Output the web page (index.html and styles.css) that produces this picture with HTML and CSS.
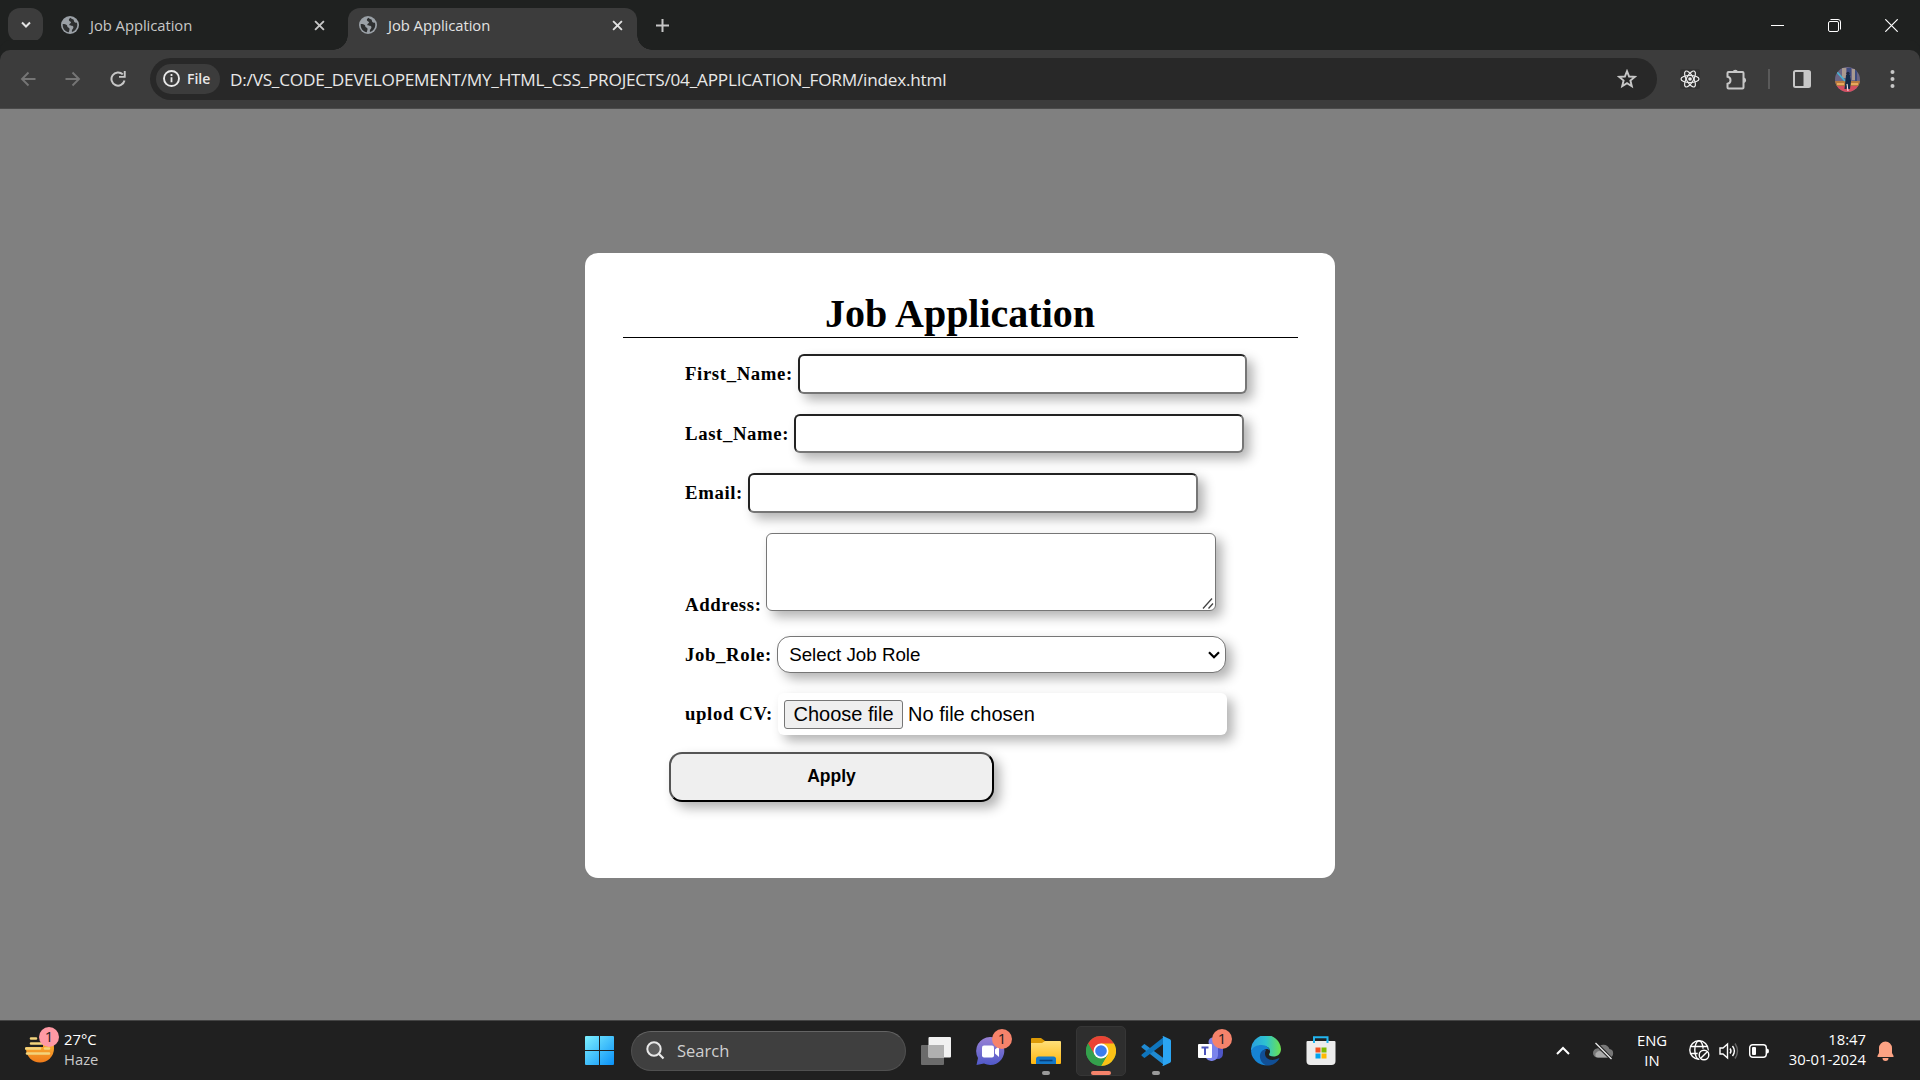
FILE: index.html
```html
<!DOCTYPE html>
<html lang="en">
<head>
<meta charset="utf-8">
<title>Job Application</title>
<link rel="stylesheet" href="styles.css">
</head>
<body>
<svg class="defs" width="0" height="0">
  <defs>
    <symbol id="globe" viewBox="0 0 18 18">
      <circle cx="9" cy="9" r="9" fill="#9aa0a6"/>
      <path d="M9.500 1.700C8 2.600 7.600 3.600 8 4.600c.5 1 1.900.8 2 1.800.1 1-1.700 1-1.700 2.200 0 1 .9 1.100 2 1.100 1.500 0 2.300.6 2.100 1.800-.2 1.500-1.600 1.800-1.600 3.400l.2 1.200c3.300-1.100 5.300-3.900 5.300-7.100 0-1-.2-1.800-.5-2.600-.8.5-1.800.2-2.400-.5-.8-.9-.2-1.600-1-2.400-.7-.6-1.900-.5-2.900-1.800zM1.700 8c1.900.1 3.600.3 4.300 1.300.5.9.1 1.700 1.100 2.100 1.100.4 1.600 1 1.400 2.100l-.7 2.700C4.500 15.800 1.700 12.900 1.700 9z" fill="#2d2f30"/>
    </symbol>
    <symbol id="cross" viewBox="0 0 10 10"><path d="M1 1l8 8M9 1l-8 8" stroke="currentColor" stroke-width="1.700" fill="none"/></symbol>
  </defs>
</svg>

<header class="tabs">
  <div class="tab-search"><svg width="10" height="8" viewBox="0 0 10 8"><path d="M1 1.500l4 4 4-4" fill="none" stroke="#e3e3e3" stroke-width="2"/></svg></div>
  <div class="tab">
    <svg class="favicon"><use href="#globe"/></svg><span class="tab-title">Job Application</span><svg class="tab-close"><use href="#cross"/></svg>
  </div>
  <div class="tab active">
    <svg class="favicon"><use href="#globe"/></svg><span class="tab-title">Job Application</span><svg class="tab-close"><use href="#cross"/></svg>
  </div>
  <svg class="new-tab" width="13" height="13" viewBox="0 0 13 13"><path d="M6.500 0v13M0 6.500h13" stroke="#c7c7c7" stroke-width="2"/></svg>
  <div class="window-buttons">
    <svg width="13" height="13" viewBox="0 0 13 13"><path d="M0 6.500h13" stroke="#fff"/></svg>
    <svg width="13" height="13" viewBox="0 0 13 13"><rect x=".5" y="2.500" width="10" height="10" rx="1.500" fill="none" stroke="#fff"/><path d="M2.500.5h7.500a2.500 2.500 0 0 1 2.500 2.500v7.500" fill="none" stroke="#fff"/></svg>
    <svg width="13" height="13" viewBox="0 0 13 13"><path d="M.3.3l12.400 12.400M12.700.3L.3 12.700" stroke="#fff" stroke-width="1.200"/></svg>
  </div>
</header>

<nav class="toolbar">
  <div class="nav-buttons">
    <svg width="16" height="16" viewBox="0 0 16 16"><path d="M15.500 8H2M8.500 1.500L2 8l6.500 6.500" fill="none" stroke="#757575" stroke-width="1.900"/></svg>
    <svg width="16" height="16" viewBox="0 0 16 16"><path d="M.5 8H14M7.500 1.500L14 8l-6.500 6.500" fill="none" stroke="#757575" stroke-width="1.900"/></svg>
    <svg width="16" height="16" viewBox="0 0 16 16"><path d="M14.500 9.500A6.600 6.600 0 1 1 12.800 3.400" fill="none" stroke="#c7c7c7" stroke-width="2"/><path d="M15.700 0v6.700H9V4.900h4.800V0z" fill="#c7c7c7"/></svg>
  </div>
  <div class="omnibox">
    <div class="chip"><svg width="17" height="17" viewBox="0 0 17 17"><circle cx="8.500" cy="8.500" r="7.500" fill="none" stroke="#e8e8e8" stroke-width="1.900"/><path d="M8.500 7.300v5M8.500 4v2" stroke="#e8e8e8" stroke-width="1.800"/></svg><span>File</span></div>
    <span class="url">D:/VS_CODE_DEVELOPEMENT/MY_HTML_CSS_PROJECTS/04_APPLICATION_FORM/index.html</span>
    <svg class="star" width="20" height="20" viewBox="0 0 20 20"><path d="M10 2.200l2.100 5.300 5.700.4-4.400 3.700 1.400 5.600-4.800-3.100-4.800 3.100 1.400-5.600L2.200 7.900l5.700-.4z" fill="none" stroke="#c7c7c7" stroke-width="1.900"/></svg>
  </div>
  <div class="extensions">
    <svg class="react" width="20" height="20" viewBox="0 0 20 20"><rect width="20" height="20" rx="2" fill="#333"/><g fill="none" stroke="#eee" stroke-width="1.200"><ellipse cx="10" cy="10" rx="9" ry="3.500"/><ellipse cx="10" cy="10" rx="9" ry="3.500" transform="rotate(60 10 10)"/><ellipse cx="10" cy="10" rx="9" ry="3.500" transform="rotate(120 10 10)"/></g><circle cx="10" cy="10" r="1.800" fill="#eee"/></svg>
    <svg class="puzzle" width="21" height="21" viewBox="0 0 21 21"><path d="M2.500 3h14q1 0 1 1v14.500q0 1-1 1h-14q-1 0-1-1v-3.700C5.500 14 5.500 8.500 1.500 7.700V4q0-1 1-1z" fill="none" stroke="#c7c7c7" stroke-width="2"/><path d="M6.500 3a2.900 2.900 0 0 1 5.600 0zM18 8.500a2.900 2.900 0 0 1 0 5.600z" fill="#c7c7c7"/></svg>
    <i class="divider"></i>
    <svg class="panel" width="18" height="18" viewBox="0 0 18 18"><rect x="1" y="1" width="16" height="16" rx="1.500" fill="none" stroke="#c7c7c7" stroke-width="2"/><path d="M10.500 1H17v16h-6.500z" fill="#c7c7c7"/></svg>
    <svg class="avatar" width="25" height="25" viewBox="0 0 25 25"><clipPath id="round"><circle cx="12.500" cy="12.500" r="12.500"/></clipPath><g clip-path="url(#round)"><path fill="#6c6685" d="M0 0h25v25H0z"/><path fill="#a99a91" d="M7 1h4v10H7zM17 2h3v11h-3z"/><path fill="#3d4c80" d="M12 1h4v8h-4zM20 3h2v11h-2z"/><path fill="#b7793e" d="M0 14h25v5H0z"/><path fill="#d44e60" d="M0 19h25v6H0z"/><path fill="#e8a75d" d="M2 16h7v2H2zM16 16h7v2h-7z"/><path d="M2 5l8 9" stroke="#45b2d2" stroke-width="1.700"/><circle cx="13" cy="6.500" r="1.700" fill="#1d2740"/><path d="M11 8h4l1 6-1 8h-2l-.5-6-1 6h-2l1-9z" fill="#152b49"/><path d="M12 17l1 7" stroke="#eee"/></g></svg>
    <svg class="menu" width="5" height="18" viewBox="0 0 5 18"><g fill="#c7c7c7"><circle cx="2.500" cy="2" r="2"/><circle cx="2.500" cy="9" r="2"/><circle cx="2.500" cy="16" r="2"/></g></svg>
  </div>
</nav>

<main class="page">
  <section class="card">
    <h1>Job Application</h1>
    <form class="form">
      <div class="row first"><label for="first">First_Name:</label><input id="first" class="field" type="text"></div>
      <div class="row last"><label for="last">Last_Name:</label><input id="last" class="field" type="text"></div>
      <div class="row email"><label for="mail">Email:</label><input id="mail" class="field" type="email"></div>
      <div class="row address"><label for="addr">Address:</label>
        <div class="control"><textarea id="addr" class="field area"></textarea><svg class="grip" width="12" height="11" viewBox="0 0 12 11"><path d="M1 10.500L10 .5M6.500 10.500L11 5.500" stroke="#444" stroke-width="1.300"/></svg></div>
      </div>
      <div class="row role"><label for="role">Job_Role:</label>
        <div class="control"><select id="role" class="field select"><option>Select Job Role</option></select><svg class="arrow" width="12" height="8" viewBox="0 0 12 8"><path d="M1 1.200l5 5 5-5" fill="none" stroke="#000" stroke-width="2.200"/></svg></div>
      </div>
      <div class="row upload"><label>uplod CV:</label><div class="file"><span class="file-button">Choose file</span><span>No file chosen</span></div></div>
      <button class="apply" type="button">Apply</button>
    </form>
  </section>
</main>

<footer class="taskbar">
  <div class="weather">
    <div class="badged">
      <svg width="29" height="26" viewBox="0 0 29 26"><defs><linearGradient id="sun" x2="0" y2="1"><stop stop-color="#ffc83d"/><stop offset="1" stop-color="#ef7b1a"/></linearGradient></defs><circle cx="15" cy="11.500" r="14" fill="url(#sun)"/><path d="M0 0h18v10H0z" fill="#202020"/><path d="M6 1.500h5M6 6.500h14M1 11.500h14M20 11.500h4M2 16.500h22" stroke="#f3d47c" stroke-width="2.600" stroke-linecap="round"/></svg>
      <b class="badge pink">1</b>
    </div>
    <div class="weather-text"><span>27°C</span><span class="haze">Haze</span></div>
  </div>

  <div class="apps">
    <svg class="start" width="29" height="29" viewBox="0 0 29 29"><defs><linearGradient id="win" gradientUnits="userSpaceOnUse" x2="29" y2="29"><stop stop-color="#7df0ff"/><stop offset="1" stop-color="#0a91f8"/></linearGradient></defs><path d="M1 0h13v14H0V1q0-1 1-1zM15 0h13q1 0 1 1v13H15zM0 15h14v14H1q-1 0-1-1zM15 15h14v13q0 1-1 1H15z" fill="url(#win)"/></svg>
    <div class="search"><svg width="19" height="19" viewBox="0 0 19 19"><circle cx="8" cy="8" r="6.700" fill="#5c5c5c" stroke="#e8e8e8" stroke-width="2"/><path d="M12.800 12.800l4.700 4.700" stroke="#e8e8e8" stroke-width="2.200"/></svg><span>Search</span></div>
    <div class="icons">
      <div class="app"><svg width="30" height="28" viewBox="0 0 30 28"><rect y="8" width="23" height="20" rx="1" fill="#6b6b6b"/><rect x="7.500" width="22.500" height="20.500" rx="1" fill="#f1f1f1"/><path d="M7.500 8H23v12.500H7.500z" fill="#b0b0b0"/></svg></div>
      <div class="app">
        <svg class="chat" width="30" height="30" viewBox="0 0 30 30"><defs><linearGradient id="chat" x2="0" y2="1"><stop stop-color="#9a82d5"/><stop offset="1" stop-color="#5059c9"/></linearGradient></defs><path d="M15 1a14 14 0 1 1-6 26.500L1.500 29 3 22A14 14 0 0 1 15 1z" fill="url(#chat)"/><rect x="7" y="9.500" width="12" height="12" rx="2" fill="#fff"/><path d="M20 13.500l4-3.500v11l-4-3.500z" fill="#fff"/></svg>
        <b class="badge">1</b>
      </div>
      <div class="app"><svg width="30" height="30" viewBox="0 0 30 30"><defs><linearGradient id="fold" x2="0" y2="1"><stop stop-color="#ffe07a"/><stop offset="1" stop-color="#ffb70f"/></linearGradient></defs><path d="M0 3q0-1 1-1h9l4 3v8H0z" fill="#dc9a06"/><path d="M0 7h11l3-2h15q1 0 1 1v21q0 1-1 1H1q-1 0-1-1z" fill="url(#fold)"/><path d="M5 28v-5q0-2.500 2.500-2.500h15Q25 20.500 25 23v5z" fill="#1378c9"/><path d="M8.500 24.500h13" stroke="#073f7c" stroke-width="1.600"/></svg><i class="dot"></i></div>
      <div class="app current"><svg width="30" height="30" viewBox="0 0 30 30"><circle cx="15" cy="15" r="15" fill="#34a04c"/><path d="M15 15L2 7.500A15 15 0 0 1 28 7.500z" fill="#ea4335"/><path d="M15 7.500h13A15 15 0 0 1 15 30l6.500-11.200z" fill="#fbc116"/><path d="M2 7.500l6.500 11.300L15 7.500z" fill="#ea4335"/><path d="M2 7.500l6.500 11.300A7.500 7.500 0 0 0 15 22.500L21.500 18.800 15 30A15 15 0 0 1 2 7.500z" fill="#34a04c"/><circle cx="15" cy="15" r="7.500" fill="#fff"/><circle cx="15" cy="15" r="5.800" fill="#3b7ded"/></svg><i class="dot wide"></i></div>
      <div class="app"><svg width="30" height="30" viewBox="0 0 30 30"><path d="M.7 10.200l2-1.800q.7-.6 1.500 0L23 22.500V29L.7 11.500q-.7-.7 0-1.300z" fill="#1f8ad2"/><path d="M.7 19.800l2 1.800q.7.600 1.500 0L23 7.500V.8L.7 18.500q-.7.7 0 1.300z" fill="#0f75bd"/><path d="M22 0l7 3.200q1 .5 1 1.700v20.200q0 1.200-1 1.700L22 30q-.8 0-1.400-.6 1.400.8 1.400-1V1.600q0-1.800-1.400-1Q21.200 0 22 0z" fill="#2ba5f3"/></svg><i class="dot"></i></div>
      <div class="app">
        <svg width="30" height="30" viewBox="0 0 30 30"><circle cx="17" cy="6" r="4.500" fill="#7b83eb"/><path d="M18 10h9v7q0 6-6 6h-3z" fill="#4e56c7"/><path d="M11 10h11v9a6.500 6.500 0 0 1-12 3z" fill="#7b83eb"/><rect x="2" y="8" width="14" height="14" rx="1" fill="#fff"/><path d="M5.500 11.500h7M9 11.500V19" stroke="#4b53bc" stroke-width="2"/></svg>
        <b class="badge">1</b>
      </div>
      <div class="app"><svg width="30" height="30" viewBox="0 0 30 30"><defs><linearGradient id="e1" x2="1"><stop stop-color="#299ee0"/><stop offset=".5" stop-color="#2ec3d0"/><stop offset="1" stop-color="#6be24d"/></linearGradient></defs><path d="M0 15a15 15 0 0 1 30-2c0 5-3.500 7.500-7.500 7.500-3 0-5-1-4.300-2.500 2-3 .5-7.500-5-8C7 9.500 2 12 0 15z" fill="url(#e1)"/><path d="M0 15C1.500 11 6 9 10.500 9c5 0 8 3 8.300 6-1-2-3.300-2.500-5-1.500-4 2.500-3 9.500 2 12.500 1.700 1 4 1.500 5 2A15 15 0 0 1 0 15z" fill="#1683d3"/><path d="M10.500 15.500c-4 5 0 14.500 7.500 14 5-.5 8.500-3.500 10.500-7-.5-.5-1-.2-1.500 0-6 3-13 1-13-5 0-2 .8-3.200 1.500-4-2 0-4 .5-5 2z" fill="#114f95"/></svg></div>
      <div class="app"><svg width="30" height="30" viewBox="0 0 30 30"><path d="M8 7V1.200h13.500V7" fill="none" stroke="#22b5ef" stroke-width="2"/><path d="M.5 6q0-1 1-1h27q1 0 1 1v19q0 4-4 4h-21q-4 0-4-4z" fill="#ececec"/><path d="M8 7V4.500M21.500 7V4.500" stroke="#22b5ef" stroke-width="2"/><path d="M9.500 11.500h5v5h-5z" fill="#f25022"/><path d="M15.500 11.500h5v5h-5z" fill="#7fba00"/><path d="M9.500 17.500h5v5h-5z" fill="#00a4ef"/><path d="M15.500 17.500h5v5h-5z" fill="#ffb900"/></svg></div>
    </div>
  </div>

  <div class="tray">
    <svg class="up" width="14" height="9" viewBox="0 0 14 9"><path d="M1 8l6-6 6 6" fill="none" stroke="#fff" stroke-width="2"/></svg>
    <svg class="cloud" width="21" height="18" viewBox="0 0 21 18"><path d="M4.500 15.500a4.500 4.500 0 0 1 0-9A6.500 6.500 0 0 1 16.500 7a4.300 4.300 0 0 1 0 8.500z" fill="#777"/><path d="M3 15a4 4 0 0 1 3-6l8 1 5 4.500-2 1H5z" fill="#aaa"/><path d="M2.500 1l16 16" stroke="#202020" stroke-width="3.500"/><path d="M2.500 1l16 16" stroke="#eee" stroke-width="1.300"/></svg>
    <div class="lang"><span>ENG</span><span>IN</span></div>
    <svg class="net" width="21" height="21" viewBox="0 0 21 21"><g fill="none" stroke="#fff" stroke-width="1.400"><circle cx="10" cy="10" r="9.200"/><ellipse cx="10" cy="10" rx="4.200" ry="9.200"/><path d="M1.800 6.500h16.500M1.800 13.500H12"/></g><circle cx="15" cy="15" r="6.500" fill="#202020"/><circle cx="15" cy="15" r="4.800" fill="none" stroke="#fff" stroke-width="1.400"/><path d="M11.700 18.300l6.600-6.600" stroke="#fff" stroke-width="1.400"/></svg>
    <svg class="sound" width="20" height="18" viewBox="0 0 20 18"><g fill="none" stroke="#fff" stroke-width="1.400"><path d="M1 6h3l4.500-4v14L4 12H1z"/><path d="M11 6.500q2 2.500 0 5M13.500 4q3.800 5 0 10"/><path d="M16 1.500q5 7.500 0 15" stroke="#666"/></g></svg>
    <svg class="battery" width="20" height="14" viewBox="0 0 20 14"><rect x=".7" y=".7" width="16.600" height="12.600" rx="3" fill="none" stroke="#fff" stroke-width="1.400"/><rect x="3" y="3" width="4" height="8" rx="1" fill="#fff"/><path d="M18 4.500q2 0 2 2.500t-2 2.500z" fill="#fff"/></svg>
    <div class="clock"><span>18:47</span><span>30-01-2024</span></div>
    <svg class="bell" width="17" height="20" viewBox="0 0 17 20"><path d="M8.500.5a6.500 6.500 0 0 1 6.500 6.500v5l1.600 3q.4 1-.8 1H1.200q-1.200 0-.8-1L2 12V7A6.500 6.500 0 0 1 8.500.5zM5.500 17h6a3 3 0 0 1-6 0z" fill="#fca283"/></svg>
  </div>
</footer>
</body>
</html>
```
FILE: styles.css
```css
* { box-sizing: border-box; }
body {
  margin: 0;
  width: 1920px;
  height: 1080px;
  overflow: hidden;
  display: flex;
  flex-direction: column;
  background: #808080;
  font-family: "Open Sans", "Noto Sans", sans-serif;
}
svg { display: block; flex: none; }
.defs { position: absolute; }

/* Tab strip */
.tabs {
  height: 50px;
  background: #1f2120;
  display: flex;
  align-items: center;
  padding-left: 8px;
  flex: none;
}
.tab-search {
  width: 35px;
  height: 34px;
  border-radius: 12px;
  background: #3c3c3c;
  display: grid;
  place-items: center;
}
.tab {
  width: 290px;
  height: 42px;
  display: flex;
  align-items: center;
  padding: 0 15px 8px 11px;
  color: #c7c7c7;
  margin: 8px 0 0 7px;
  position: relative;
}
.tab .favicon { width: 18px; height: 18px; }
.tab-title {
  margin-left: 11px;
  flex: 1;
  font-size: 14.800px;
  line-height: 20px;
  letter-spacing: -0.05px;
  white-space: nowrap;
}
.tab-close { width: 11px; height: 11px; }
.tab.active {
  width: 289px;
  margin-left: 8px;
  padding-right: 14px;
  background: #3c3c3c;
  border-radius: 12px 12px 0 0;
  color: #e3e3e3;
}
.tab.active::before,
.tab.active::after {
  content: "";
  position: absolute;
  bottom: 0;
  width: 15px;
  height: 15px;
}
.tab.active::before { left: -15px; background: radial-gradient(circle at 0 0, transparent 14.500px, #3c3c3c 15px); }
.tab.active::after { right: -15px; background: radial-gradient(circle at 100% 0, transparent 14.500px, #3c3c3c 15px); }
.new-tab { margin-left: 19px; }
.window-buttons { margin: 0 22px 0 auto; display: flex; gap: 44px; }

/* Toolbar */
.toolbar {
  height: 59px;
  background: #3c3c3c;
  border-bottom: 1px solid #4a4a4a;
  display: flex;
  align-items: center;
  flex: none;
  padding-left: 20px;
  border-radius: 10px 10px 0 0;
  box-shadow: 0 -10px 0 #1f2120;
}
.nav-buttons { display: flex; gap: 29px; width: 130px; }
.omnibox {
  width: 1507px;
  height: 42px;
  border-radius: 21px;
  background: #282828;
  display: flex;
  align-items: center;
  padding: 0 20px 0 6px;
}
.chip {
  width: 64px;
  height: 30px;
  border-radius: 15px;
  background: #3c3c3c;
  color: #e8e8e8;
  display: flex;
  align-items: center;
  gap: 7px;
  padding: 0 0 1px 7px;
  font-size: 14px;
  font-weight: 600;
}
.url {
  margin-left: 10px;
  font-size: 17.200px;
  color: #e8e8e8;
  white-space: nowrap;
  letter-spacing: -0.22px;
}
.star { margin-left: auto; }
.extensions { display: flex; align-items: center; }
.react { margin-left: 23px; }
.puzzle { margin-left: 26px; }
.divider { width: 2px; height: 20px; margin-left: 21px; background: #5a5a5a; }
.panel { margin-left: 23px; }
.avatar { margin-left: 24px; }
.menu { margin-left: 30px; }

/* Page */
.page { flex: 1; background: #808080; padding-top: 144px; }
.card {
  width: 750px;
  height: 625px;
  margin: 0 auto;
  padding: 38px 37px 38px 38px;
  border-radius: 13px;
  background: #fff;
  font-family: "Liberation Serif", serif;
}
h1 {
  margin: 0;
  height: 47px;
  padding-right: 1px;
  border-bottom: 1px solid #000;
  font-size: 40px;
  line-height: 46px;
  text-align: center;
  color: #000;
}
.form { padding-left: 62px; }
.row { display: flex; align-items: center; margin-bottom: 20px; }
.row label {
  margin-right: 5.250px;
  font-size: 18.750px;
  line-height: 22px;
  font-weight: 700;
  letter-spacing: 0.625px;
  color: #000;
}
.row.first label,
.row.email label { padding-bottom: 1px; }
.field, .file, .apply { box-shadow: 6px 6px 12px rgba(0, 0, 0, .3); }
.field {
  display: block;
  width: 450px;
  height: 40px;
  margin: 0;
  border: 2px solid;
  border-color: #222 #767676 #767676 #222;
  border-radius: 6px;
  background: #fff;
  font-family: "Liberation Sans", sans-serif;
}
.control { position: relative; }
.row.first { margin-top: 16px; }
.row.first .field { width: 449px; }
.row.last .field { height: 39px; }
.row.address { align-items: flex-end; margin-bottom: 25px; }
.row.address label { line-height: 12px; margin-right: 4.500px; }
.area { height: 78px; border: 1px solid #767676; resize: none; }
.grip { position: absolute; right: 2px; bottom: 2px; }
.select {
  width: 449px;
  height: 37px;
  appearance: none;
  border: 1px solid #767676;
  border-radius: 13px;
  padding: 0 11px;
  font-size: 18.750px;
  color: #000;
}
.arrow { position: absolute; right: 6px; top: 15px; }
.row.upload { margin-bottom: 17px; }
.file {
  width: 449px;
  height: 42px;
  border-radius: 6px;
  background: #fff;
  display: flex;
  align-items: center;
  gap: 5px;
  padding-left: 6px;
  font: 20px "Liberation Sans", sans-serif;
}
.file-button {
  width: 119px;
  height: 29px;
  border: 1px solid #767676;
  border-radius: 3px;
  background: #efefef;
  line-height: 26px;
  text-align: center;
}
.apply {
  display: block;
  width: 325px;
  height: 50px;
  margin-left: -16px;
  padding: 0 0 1px;
  border: 2px solid;
  border-color: #555 #000 #000 #555;
  border-radius: 13px;
  background: #efefef;
  color: #000;
  font: bold 17.500px "Liberation Sans", sans-serif;
}

/* Taskbar */
.taskbar {
  height: 60px;
  flex: none;
  background: #202020;
  border-top: 1px solid #444;
  display: flex;
  align-items: center;
  color: #fff;
  font-size: 14.800px;
}
.weather { display: flex; width: 585px; padding-left: 25px; }
.badged { position: relative; padding-top: 7px; width: 39px; }
.badge {
  position: absolute;
  width: 20px;
  height: 20px;
  border-radius: 50%;
  background: #f5836b;
  color: #1c1c1c;
  font-size: 15px;
  font-weight: 400;
  line-height: 19px;
  text-align: center;
}
.badge.pink { left: 14px; top: -3px; background: #ff99a4; }
.weather-text, .lang, .clock { display: flex; flex-direction: column; line-height: 20px; padding-bottom: 2px; }
.weather-text { margin-top: -1px; }
.haze { color: #c9c9c9; }
.apps { display: flex; align-items: center; }
.search {
  width: 275px;
  height: 40px;
  margin-left: 17px;
  border-radius: 20px;
  border: 1px solid #505050;
  border-top-color: #646464;
  background: #3f3f3f;
  color: #d0d0d0;
  display: flex;
  align-items: center;
  gap: 12px;
  padding-left: 14px;
  font-size: 16.500px;
}
.icons { display: flex; gap: 5px; margin-left: 5px; }
.app {
  width: 50px;
  height: 50px;
  border-radius: 5px;
  display: grid;
  place-items: center;
  position: relative;
}
.app.current { background: #2e2e2e; border: 1px solid #363636; }
.app .chat { margin-right: 2px; }
.app .badge { left: 26px; top: 3px; }
.dot {
  position: absolute;
  bottom: 1px;
  left: 21px;
  width: 8px;
  height: 4px;
  border-radius: 2px;
  background: #9a9a9a;
}
.dot.wide { left: 14px; bottom: 0; width: 20px; background: #f5836b; }
.tray { display: flex; align-items: center; margin-left: auto; padding-right: 26px; }
.cloud { margin-left: 23px; }
.lang { margin-left: 17px; width: 42px; text-align: center; }
.net { margin-left: 16px; }
.sound { margin-left: 9px; }
.battery { margin-left: 10px; }
.clock { margin-left: 9px; width: 88px; text-align: right; align-items: flex-end; padding-bottom: 3px; }
.bell { margin-left: 11px; }
```
